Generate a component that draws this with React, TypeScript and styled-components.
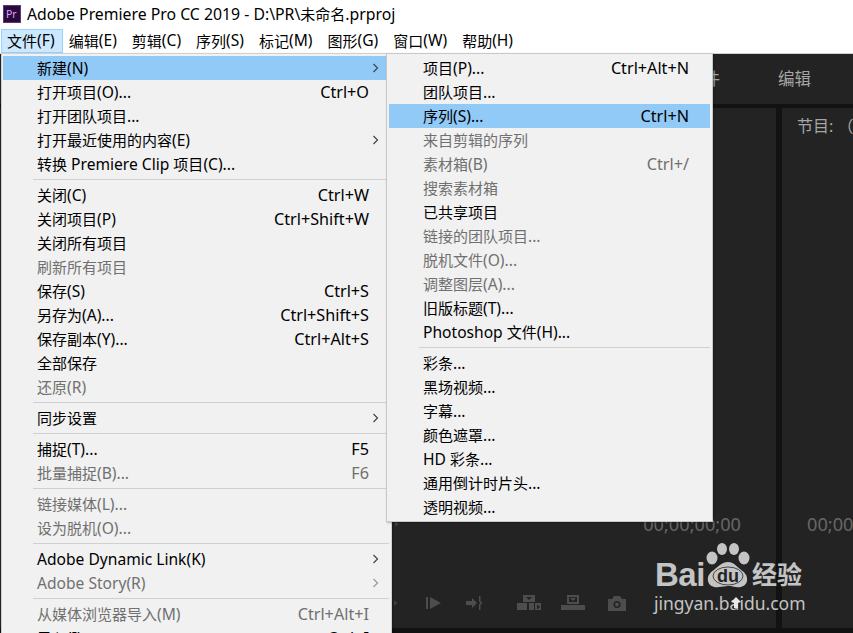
import React from "react";
import styled, { createGlobalStyle } from "styled-components";

const Global = createGlobalStyle`
  html, body { margin: 0; padding: 0; height: 100%; overflow: hidden; background: #fff; }
  #root { height: 100%; }
  * { box-sizing: border-box; }
`;

const FONT = `"Noto Sans", "Noto Sans CJK SC", sans-serif`;

const Window = styled.div`
  position: relative;
  width: 853px;
  height: 633px;
  overflow: hidden;
  display: flex;
  flex-direction: column;
  font-family: ${FONT};
  font-size: 15.6px;
  color: #000;
  background: #fff;
`;
const Cjk = styled.span`
  font-size: 15px;
`;
const TitleBar = styled.div`
  height: 28px;
  flex: none;
  display: flex;
  align-items: center;
  gap: 6px;
  padding: 0 0 0 3px;
  font-size: 15.8px;
`;
const MenuBar = styled.div`
  height: 26px;
  flex: none;
  display: flex;
  align-items: stretch;
  padding: 1px 0 0 1px;
  gap: 0;
  border-bottom: 1px solid #d0d0d0;
`;
const MenuTitle = styled.div<{ $open?: boolean }>`
  display: flex;
  align-items: center;
  padding: 0 7px 2px 5px;
  margin-right: ${(p) => (p.$open ? "0" : "1px")};
  border: 1px solid ${(p) => (p.$open ? "#99d1ff" : "transparent")};
  background: ${(p) => (p.$open ? "#cce8ff" : "transparent")};
  white-space: nowrap;
`;
const Workspace = styled.div`
  flex: 1;
  min-height: 0;
  display: flex;
  flex-direction: column;
  background: #121212;
  padding-bottom: 5px;
`;
const TabStrip = styled.div`
  height: 50px;
  flex: none;
  margin-bottom: 4px;
  background: #232323;
  color: #a6a6a6;
  font-size: 16.5px;
  display: flex;
  align-items: center;
  justify-content: flex-end;
  gap: 58px;
  padding: 0 42px 3px 0;
`;
const Panels = styled.div`
  flex: 1;
  min-height: 0;
  display: flex;
  gap: 6px;
`;
const SourcePanel = styled.div`
  flex: 1;
  background: #232323;
  display: flex;
  flex-direction: column;
  align-items: flex-end;
  justify-content: flex-end;
  padding: 0 35px 14px 0;
`;
const ProgramPanel = styled.div`
  width: 71px;
  flex: none;
  background: #232323;
  color: #a6a6a6;
  display: flex;
  flex-direction: column;
  justify-content: space-between;
  padding: 5px 0 93px 15px;
  font-size: 16px;
  white-space: nowrap;
  overflow: hidden;
`;
const TimecodeRow = styled.div`
  width: 350px;
  display: flex;
  align-items: center;
  justify-content: space-between;
  color: #666;
  font-size: 18.2px;
  line-height: 22px;
  margin-bottom: 57px;
  white-space: nowrap;
`;
const ProgramTimecode = styled.div`
  color: #666;
  font-size: 18.2px;
  line-height: 22px;
  margin-left: 10px;
`;
const Transport = styled.div`
  width: 350px;
  height: 22px;
  display: flex;
  align-items: center;
  color: #4d4d4d;
`;
const Menu = styled.div`
  position: absolute;
  left: 1px;
  top: 53px;
  width: 391px;
  background: #f1f1f1;
  border: 1px solid #cfcfcf;
  padding: 2px 2px 2px 1px;
  box-shadow: 1px 1px 2px rgba(0, 0, 0, 0.25);
`;
const SubMenu = styled(Menu)`
  left: 386px;
  width: 327px;
  height: 469px;
  padding: 2px 2px 0 2px;
  border-color: #c8c8c8;
`;
const Row = styled.div<{ $active?: boolean; $disabled?: boolean; $sub?: boolean }>`
  height: 24px;
  display: flex;
  align-items: center;
  padding: 0 ${(p) => (p.$sub ? "21px" : "20px")} 0 34px;
  background: ${(p) => (p.$active ? "#91c9f7" : "transparent")};
  color: ${(p) => (p.$disabled ? "#707070" : "#000")};
  white-space: nowrap;
  position: relative;
`;
const Label = styled.span`
  flex: 1;
`;
const Shortcut = styled.span`
  font-size: 16.2px;
`;
const Arrow = styled.svg`
  position: absolute;
  right: 9px;
  top: 7px;
`;
const Separator = styled.div`
  height: 1px;
  margin: 3px 0 3px 30px;
  background: #d0d0d0;
`;
const Watermark = styled.div`
  position: absolute;
  left: 655px;
  top: 541px;
  width: 180px;
  height: 74px;
  color: #c4c4c4;
`;
const BaiText = styled.span`
  position: absolute;
  left: 0;
  top: 16px;
  font: bold 33px/36px "Liberation Sans", sans-serif;
  letter-spacing: -0.5px;
`;
const JingText = styled.span`
  position: absolute;
  left: -1px;
  top: 50px;
  font: 17.5px/24px "Noto Sans", sans-serif;
  white-space: nowrap;
`;
const JingDot = styled.svg`
  position: absolute;
  left: 76px;
  top: 56px;
`;
const SeText = styled.span`
  position: absolute;
  left: 97px;
  top: 17px;
  font: bold 25px/30px "Noto Sans CJK SC", sans-serif;
  white-space: nowrap;
`;
const PawIcon = styled.svg`
  position: absolute;
  left: 50px;
  top: 2px;
`;
const TransportIcon = styled.svg<{ $gap: number }>`
  flex: none;
  margin-left: ${(p) => p.$gap}px;
`;

type Item =
  | { sep: true }
  | { t: string; k?: string; d?: boolean; a?: boolean; s?: boolean };

const fileMenu: Item[] = [
  { t: "新建(N)", s: true, a: true },
  { t: "打开项目(O)...", k: "Ctrl+O" },
  { t: "打开团队项目..." },
  { t: "打开最近使用的内容(E)", s: true },
  { t: "转换 Premiere Clip 项目(C)..." },
  { sep: true },
  { t: "关闭(C)", k: "Ctrl+W" },
  { t: "关闭项目(P)", k: "Ctrl+Shift+W" },
  { t: "关闭所有项目" },
  { t: "刷新所有项目", d: true },
  { t: "保存(S)", k: "Ctrl+S" },
  { t: "另存为(A)...", k: "Ctrl+Shift+S" },
  { t: "保存副本(Y)...", k: "Ctrl+Alt+S" },
  { t: "全部保存" },
  { t: "还原(R)", d: true },
  { sep: true },
  { t: "同步设置", s: true },
  { sep: true },
  { t: "捕捉(T)...", k: "F5" },
  { t: "批量捕捉(B)...", k: "F6", d: true },
  { sep: true },
  { t: "链接媒体(L)...", d: true },
  { t: "设为脱机(O)...", d: true },
  { sep: true },
  { t: "Adobe Dynamic Link(K)", s: true },
  { t: "Adobe Story(R)", s: true, d: true },
  { sep: true },
  { t: "从媒体浏览器导入(M)", k: "Ctrl+Alt+I", d: true },
  { t: "导入(I)...", k: "Ctrl+I" },
];

const newMenu: Item[] = [
  { t: "项目(P)...", k: "Ctrl+Alt+N" },
  { t: "团队项目..." },
  { t: "序列(S)...", k: "Ctrl+N", a: true },
  { t: "来自剪辑的序列", d: true },
  { t: "素材箱(B)", k: "Ctrl+/", d: true },
  { t: "搜索素材箱", d: true },
  { t: "已共享项目" },
  { t: "链接的团队项目...", d: true },
  { t: "脱机文件(O)...", d: true },
  { t: "调整图层(A)...", d: true },
  { t: "旧版标题(T)..." },
  { t: "Photoshop 文件(H)..." },
  { sep: true },
  { t: "彩条..." },
  { t: "黑场视频..." },
  { t: "字幕..." },
  { t: "颜色遮罩..." },
  { t: "HD 彩条..." },
  { t: "通用倒计时片头..." },
  { t: "透明视频..." },
];

const Mixed = ({ text }: { text: string }) => (
  <>
    {text.split(/([\u3000-\u9fff]+)/).map((part, i) =>
      /[\u3000-\u9fff]/.test(part) ? <Cjk key={i}>{part}</Cjk> : part
    )}
  </>
);

const Rows = ({ items, sub }: { items: Item[]; sub?: boolean }) => (
  <>
    {items.map((it, i) =>
      "sep" in it ? (
        <Separator key={i} />
      ) : (
        <Row key={i} $active={it.a} $disabled={it.d} $sub={sub}>
          <Label>
            <Mixed text={it.t} />
          </Label>
          {it.k && <Shortcut>{it.k}</Shortcut>}
          {it.s && (
            <Arrow width="8" height="10" viewBox="0 0 8 10" fill="none" stroke={it.d ? "#999" : "#444"} strokeWidth="1.2">
              <path d="M1.5 1l4 4-4 4" />
            </Arrow>
          )}
        </Row>
      )
    )}
  </>
);

const PrLogo = () => (
  <svg width="18" height="18" viewBox="0 0 18 18">
    <rect x="0" y="0" width="18" height="18" fill="#2a0a3c" />
    <rect x="0.5" y="0.5" width="17" height="17" fill="none" stroke="#5a3a78" />
    <text x="3" y="13" fontFamily="Noto Sans, sans-serif" fontSize="10.5" fill="#e0a6ff">Pr</text>
  </svg>
);

export default function App() {
  return (
    <Window>
      <Global />
      <TitleBar>
        <PrLogo />
        <span>
          <Mixed text="Adobe Premiere Pro CC 2019 - D:\PR\未命名.prproj" />
        </span>
      </TitleBar>
      <MenuBar>
        <MenuTitle $open>
          <Mixed text="文件(F)" />
        </MenuTitle>
        {["编辑(E)", "剪辑(C)", "序列(S)", "标记(M)", "图形(G)", "窗口(W)", "帮助(H)"].map((m) => (
          <MenuTitle key={m}>
            <Mixed text={m} />
          </MenuTitle>
        ))}
      </MenuBar>
      <Workspace>
        <TabStrip>
          <span>组件</span>
          <span>编辑</span>
        </TabStrip>
        <Panels>
          <SourcePanel>
            <TimecodeRow>
              <svg width="10" height="10" viewBox="0 0 10 10" fill="#3c3c3c">
                <path d="M4 2l4 3-4 3z" />
              </svg>
              <span>00;00;00;00</span>
            </TimecodeRow>
            <Transport>
              <TransportIcon $gap={2} width="6" height="10" viewBox="0 0 6 10" fill="#3c3c3c">
                <path d="M1 2l4 3-4 3z" />
              </TransportIcon>
              <TransportIcon $gap={27} width="16" height="14" viewBox="0 0 16 14" fill="currentColor">
                <rect x="0" y="1" width="2" height="12" />
                <path d="M4 1l11 6-11 6z" />
              </TransportIcon>
              <TransportIcon $gap={24} width="18" height="16" viewBox="0 0 18 16" fill="currentColor">
                <path d="M0 6h6V3l5 5-5 5v-3H0z" />
                <path d="M13 1h1.5v5l2 2-2 2v5H13v-5.5L14.5 8 13 6.5z" />
              </TransportIcon>
              <TransportIcon $gap={33} width="24" height="16" viewBox="0 0 24 16" fill="currentColor">
                <path d="M6 0h12v7H6zM0 8h10v7H0zM12 8h5v7h-5zM18 8h6v7h-6z" />
                <path d="M9 2h6l-3 3z" fill="#232323" />
                <path d="M20 9.5l3 2.5-3 2.5z" fill="#232323" />
              </TransportIcon>
              <TransportIcon $gap={20} width="24" height="16" viewBox="0 0 24 16" fill="currentColor">
                <path d="M6 0h12v9H6zM0 10h24v5H0z" />
                <path d="M8 2h8v5H8z" fill="#232323" />
                <path d="M9 3h6l-3 3z" />
              </TransportIcon>
              <TransportIcon $gap={23} width="18" height="15" viewBox="0 0 18 15" fill="currentColor">
                <path d="M0 3h4l2-3h6l2 3h4v12H0z" />
                <circle cx="9" cy="8.5" r="3.6" fill="#232323" />
                <circle cx="9" cy="8.5" r="2" />
              </TransportIcon>
            </Transport>
          </SourcePanel>
          <ProgramPanel>
            <span>节目: （</span>
            <ProgramTimecode>00;00</ProgramTimecode>
          </ProgramPanel>
        </Panels>
      </Workspace>
      <Menu>
        <Rows items={fileMenu} />
      </Menu>
      <SubMenu>
        <Rows items={newMenu} sub />
      </SubMenu>
      <Watermark>
        <BaiText>Bai</BaiText>
        <PawIcon width="46" height="48" viewBox="0 0 46 48">
          <g fill="currentColor">
            <ellipse cx="7" cy="15" rx="5.5" ry="6.5" />
            <ellipse cx="17" cy="6" rx="5" ry="6" />
            <ellipse cx="29" cy="6" rx="5" ry="6" />
            <ellipse cx="39" cy="15" rx="5.5" ry="6.5" />
            <path d="M23 19c6 0 8 4 12 7 4 3 8 6 7 12-1 5-6 7-11 6-3-.5-5-1-8-1s-6 1-9 1c-5 1-10-1-11-6-1-6 3-9 7-12 4-3 7-7 13-7z" />
          </g>
          <ellipse cx="23" cy="33" rx="15" ry="9" fill="none" stroke="#232323" strokeWidth="0.8" />
          <text x="23" y="39" textAnchor="middle" fontFamily="Liberation Sans, sans-serif" fontWeight="bold" fontSize="18" fill="#232323">du</text>
        </PawIcon>
        <SeText>经验</SeText>
        <JingText>jingyan.baidu.com</JingText>
        <JingDot width="10" height="12" viewBox="0 0 10 12" fill="#e8e8e8">
          <path d="M5 0l5 5-3 1v5H3V6L0 5z" />
        </JingDot>
      </Watermark>
    </Window>
  );
}
